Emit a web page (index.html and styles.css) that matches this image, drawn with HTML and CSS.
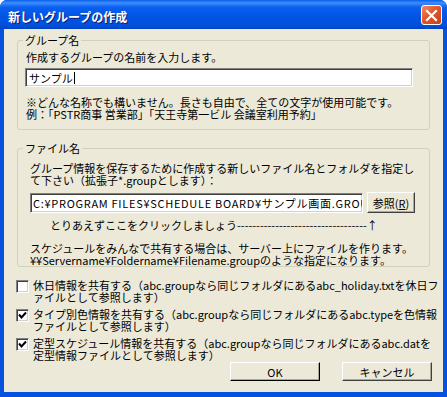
FILE: index.html
```html
<!DOCTYPE html>
<html lang="ja">
<head>
    <meta charset="UTF-8">
    <meta name="viewport" content="width=device-width, initial-scale=1.0">
    <title>新しいグループの作成</title>
    <link rel="stylesheet" href="styles.css">
</head>
<body>
    <div class="dialog">
        <div class="titlebar">
            <span class="title">新しいグループの作成</span>
            <span class="close">
                <svg width="13" height="13" viewBox="0 0 13 13">
                    <path d="M2 2 L11 11 M11 2 L2 11" stroke="#fff" stroke-width="2.2" stroke-linecap="square"/>
                </svg>
            </span>
        </div>

        <div class="content">
            <fieldset class="group group-name">
                <legend>グループ名</legend>
                <div class="group-body">
                    <p class="line">作成するグループの名前を入力します。</p>
                    <div class="field name-field">サンプル<span class="caret"></span></div>
                    <p class="note">※どんな名称でも構いません。長さも自由で、全ての文字が使用可能です。<br>例：「PSTR商事 営業部」「天王寺第一ビル 会議室利用予約」</p>
                </div>
            </fieldset>

            <fieldset class="group group-file">
                <legend>ファイル名</legend>
                <div class="group-body">
                    <p class="note">グループ情報を保存するために作成する新しいファイル名とフォルダを指定し<br>て下さい（拡張子*.groupとします）：</p>
                    <div class="file-row">
                        <div class="field file-field">C:¥PROGRAM FILES¥SCHEDULE BOARD¥サンプル画面.GROUP</div>
                        <button class="btn browse">参照(<u>R</u>)</button>
                    </div>
                    <p class="line hint">とりあえずここをクリックしましょう----------------------------------↑</p>
                    <p class="line share">スケジュールをみんなで共有する場合は、サーバー上にファイルを作ります。<br>¥¥Servername¥Foldername¥Filename.groupのような指定になります。</p>
                </div>
            </fieldset>

            <div class="options">
                <div class="option">
                    <span class="check"></span>
                    <span class="option-text">休日情報を共有する（abc.groupなら同じフォルダにあるabc_holiday.txtを休日フ<br>ァイルとして参照します）</span>
                </div>
                <div class="option">
                    <span class="check">
                        <svg width="11" height="11" viewBox="0 0 11 11"><path d="M2 4.5 L4.5 7.5 L9 2.5" fill="none" stroke="#000" stroke-width="2"/></svg>
                    </span>
                    <span class="option-text">タイプ別色情報を共有する（abc.groupなら同じフォルダにあるabc.typeを色情報<br>ファイルとして参照します）</span>
                </div>
                <div class="option">
                    <span class="check">
                        <svg width="11" height="11" viewBox="0 0 11 11"><path d="M2 4.5 L4.5 7.5 L9 2.5" fill="none" stroke="#000" stroke-width="2"/></svg>
                    </span>
                    <span class="option-text">定型スケジュール情報を共有する（abc.groupなら同じフォルダにあるabc.datを<br>定型情報ファイルとして参照します）</span>
                </div>
            </div>

            <div class="actions">
                <button class="btn default">OK</button>
                <button class="btn">キャンセル</button>
            </div>
        </div>
    </div>
</body>
</html>
```

FILE: styles.css
```css
body {
    margin: 0;
    background-color: #ffffff;
    font-family: "Noto Sans CJK JP", sans-serif;
    font-size: 11px;
    color: #000;
}
.dialog {
    width: 447px;
    height: 397px;
    display: flex;
    flex-direction: column;
    background-color: #0652e0;
    border-radius: 7px 7px 0 0;
    overflow: hidden;
}
.titlebar {
    height: 29px;
    flex-shrink: 0;
    display: flex;
    align-items: center;
    justify-content: space-between;
    padding: 0 5px 0 8px;
    box-sizing: border-box;
    background: linear-gradient(to bottom, #0a5fe8 0%, #3d8dff 10%, #0a5fee 25%, #0054e3 60%, #0050dc 88%, #0042c0 100%);
}
.title {
    color: #fff;
    font-weight: bold;
    font-size: 12px;
    line-height: 12px;
    padding-top: 4px;
    text-shadow: 1px 1px 0 #0a1c7a;
}
.close {
    width: 21px;
    height: 20px;
    margin-top: 1px;
    box-sizing: border-box;
    display: flex;
    align-items: center;
    justify-content: center;
    border: 1px solid #fff;
    border-radius: 3px;
    background: linear-gradient(to bottom right, #f08a6a 0%, #e0562e 45%, #c8401c 100%);
}
.content {
    flex: 1;
    margin: 0 4px 5px;
    background-color: #ece9d8;
}
p {
    margin: 0;
}
.line,
.note {
    line-height: 12px;
    white-space: nowrap;
}
.group {
    width: 413px;
    box-sizing: border-box;
    margin: 0 0 0 13px;
    padding: 0;
    border: 1px solid #d0d0bf;
    border-radius: 3px;
}
.group legend {
    margin-left: 5px;
    padding: 0 2px;
    line-height: 12px;
}
.group-name {
    margin-top: 5px;
}
.group-name .group-body {
    padding: 5px 0 9px 8px;
}
.group-file {
    margin-top: 12px;
}
.group-file .group-body {
    padding: 8px 0 0 12px;
}
.field {
    background-color: #fff;
    box-sizing: border-box;
    border: 1px solid;
    border-color: #808080 #fff #fff #808080;
    box-shadow: inset 1px 1px 0 #404040, inset -1px -1px 0 #d4d0c8;
    white-space: nowrap;
    overflow: hidden;
    display: flex;
    align-items: center;
    padding-left: 3px;
}
.name-field {
    width: 388px;
    height: 19px;
    margin: 5px 0 0 -1px;
}
.caret {
    display: inline-block;
    width: 1px;
    height: 12px;
    background-color: #000;
    margin-left: 1px;
}
.group-name .note {
    margin-top: 9px;
}
.file-row {
    margin-top: 6px;
    height: 21px;
    display: flex;
    align-items: center;
    gap: 4px;
}
.file-field {
    width: 333px;
    height: 20px;
    padding-left: 2px;
    letter-spacing: 0.7px;
}
.btn {
    font-family: inherit;
    font-size: 11px;
    color: #000;
    background-color: #ece9d8;
    border: 1px solid;
    border-color: #fff #404040 #404040 #fff;
    box-shadow: inset -1px -1px 0 #aca899;
    padding: 0;
    box-sizing: border-box;
}
.browse {
    width: 48px;
    height: 21px;
}
.hint {
    margin: 6px 0 0 20px;
}
.share {
    margin-top: 11px;
}
.options {
    margin: 12px 0 0 12px;
    display: flex;
    flex-direction: column;
    gap: 5px;
}
.option {
    display: flex;
    gap: 4px;
}
.option-text {
    line-height: 12px;
    white-space: nowrap;
}
.check {
    width: 13px;
    height: 13px;
    margin-top: 1px;
    flex-shrink: 0;
    box-sizing: border-box;
    background-color: #fff;
    border: 1px solid;
    border-color: #808080 #fff #fff #808080;
    box-shadow: inset 1px 1px 0 #404040, inset -1px -1px 0 #d4d0c8;
    display: flex;
    align-items: center;
    justify-content: center;
}
.actions {
    margin-top: 1px;
    padding-right: 11px;
    display: flex;
    justify-content: flex-end;
    gap: 22px;
}
.actions .btn {
    width: 90px;
    height: 19px;
}
.actions .default {
    border-color: #fff #000 #000 #fff;
}
```
